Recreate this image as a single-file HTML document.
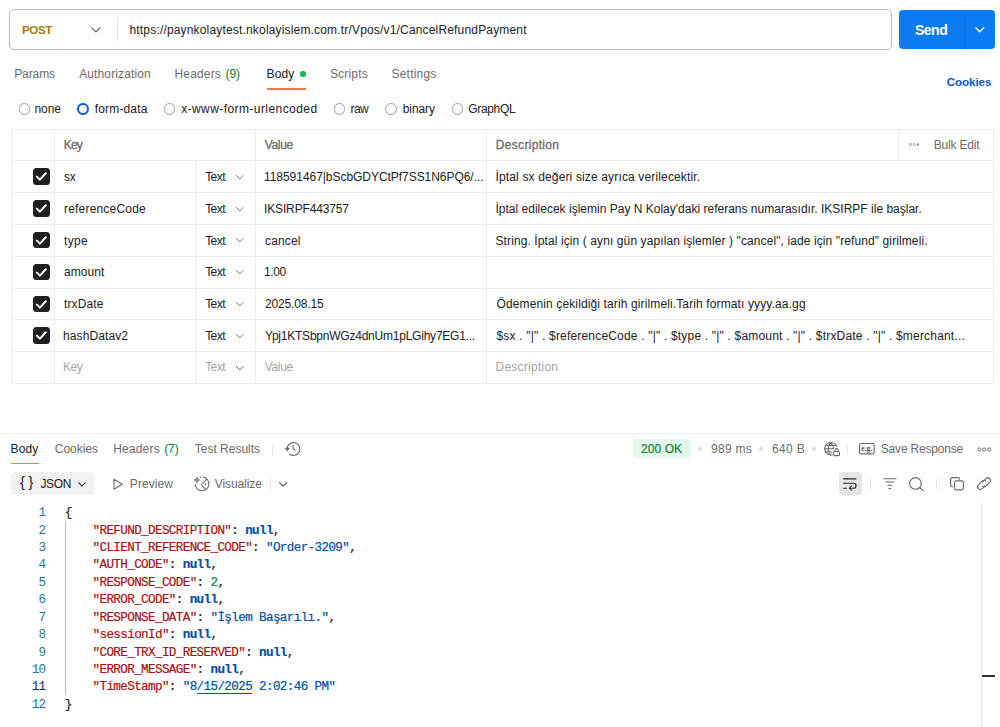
<!DOCTYPE html>
<html lang="tr">
<head>
<meta charset="utf-8">
<title>CancelRefundPayment</title>
<style>
html,body{margin:0;padding:0;background:#fff;}
body{width:1000px;height:727px;position:relative;overflow:hidden;font-family:"Liberation Sans",sans-serif;}
.t{position:absolute;white-space:pre;line-height:16px;font-family:"Liberation Sans",sans-serif;}
.a{position:absolute;}
.hl{position:absolute;height:1px;background:#ededed;}
.vl{position:absolute;width:1px;background:#ededed;}
.cb{position:absolute;left:33px;width:16.5px;height:16.5px;border-radius:3.5px;background:#1f1f1f;}
.cb svg{position:absolute;left:0;top:0;}
.rd{position:absolute;width:11.8px;height:11.8px;border:1.1px solid #9c9c9c;border-radius:50%;box-sizing:border-box;background:#fff;}
.dot{position:absolute;width:4px;height:4px;border-radius:50%;background:#dcdcdc;}
.code{position:absolute;left:0;top:0;font-family:"Liberation Mono",monospace;font-size:12.6px;letter-spacing:-0.62px;white-space:pre;line-height:17.41px;}
.ln{position:absolute;width:45.5px;text-align:right;color:#237893;}
.cl{position:absolute;left:64.8px;color:#212121;-webkit-text-stroke:0.22px;}
.k{color:#a31515;} .s{color:#0451a5;} .n{color:#0451a5;font-weight:700;} .d{color:#098658;}
svg{overflow:visible}
</style>
</head>
<body>
<!-- URL bar -->
<div class="a" style="left:9.4px;top:9.4px;width:882.4px;height:40.8px;box-sizing:border-box;border:1.5px solid #b9b9b9;border-radius:5px;"></div>
<div class="vl" style="left:117px;top:18px;height:23px;background:#e3e3e3;"></div>
<svg class="a" style="left:91px;top:27px" width="10" height="6" viewBox="0 0 10 6"><path d="M0.8 0.8 L4.9 4.8 L9 0.8" fill="none" stroke="#5c5c5c" stroke-width="1.15" stroke-linecap="round" stroke-linejoin="round"/></svg>
<!-- Send -->
<div class="a" style="left:899px;top:10.3px;width:96px;height:38.7px;border-radius:4px;background:#0c7bf1;"></div>
<div class="vl" style="left:963.5px;top:10.3px;height:38.7px;background:#0b72e2;"></div>
<svg class="a" style="left:975px;top:27.3px" width="10" height="6" viewBox="0 0 10 6"><path d="M0.7 0.7 L4.7 4.7 L8.7 0.7" fill="none" stroke="#fff" stroke-width="1.3" stroke-linecap="round" stroke-linejoin="round"/></svg>
<!-- tab underline + dot -->
<div class="a" style="left:266.7px;top:88.4px;width:39.5px;height:1.4px;background:#ff7443;"></div>
<div class="a" style="left:300.3px;top:71.3px;width:5.4px;height:5.4px;border-radius:50%;background:#1db954;"></div>
<!-- radios -->
<div class="rd" style="left:18.6px;top:102.8px"></div>
<div class="rd" style="left:77.2px;top:102.8px;border:2.7px solid #0b57d4;"></div>
<div class="rd" style="left:163.6px;top:102.8px"></div>
<div class="rd" style="left:333.6px;top:102.8px"></div>
<div class="rd" style="left:385.3px;top:102.8px"></div>
<div class="rd" style="left:451.6px;top:102.8px"></div>
<div class="hl" style="left:10.7px;top:128.50px;width:983.2px"></div>
<div class="hl" style="left:10.7px;top:160.30px;width:983.2px"></div>
<div class="hl" style="left:10.7px;top:192.10px;width:983.2px"></div>
<div class="hl" style="left:10.7px;top:223.90px;width:983.2px"></div>
<div class="hl" style="left:10.7px;top:255.70px;width:983.2px"></div>
<div class="hl" style="left:10.7px;top:287.50px;width:983.2px"></div>
<div class="hl" style="left:10.7px;top:319.30px;width:983.2px"></div>
<div class="hl" style="left:10.7px;top:351.10px;width:983.2px"></div>
<div class="hl" style="left:10.7px;top:382.70px;width:983.2px"></div>
<div class="vl" style="left:10.7px;top:128.5px;height:255.2px"></div>
<div class="vl" style="left:993.4px;top:128.5px;height:255.2px"></div>
<div class="vl" style="left:54.4px;top:129.0px;height:254.2px"></div>
<div class="vl" style="left:255.0px;top:129.0px;height:254.2px"></div>
<div class="vl" style="left:485.5px;top:129.0px;height:254.2px"></div>
<div class="vl" style="left:196.0px;top:160.8px;height:222.4px"></div>
<div class="vl" style="left:897.8px;top:129.0px;height:31.8px"></div>
<div class="cb" style="top:168.35px"><svg width="16.5" height="16.5" viewBox="0 0 16.5 16.5"><path d="M3.8 8.6 L6.9 11.6 L12.8 5.2" fill="none" stroke="#fff" stroke-width="2" stroke-linecap="round" stroke-linejoin="round"/></svg></div>
<div class="cb" style="top:200.15px"><svg width="16.5" height="16.5" viewBox="0 0 16.5 16.5"><path d="M3.8 8.6 L6.9 11.6 L12.8 5.2" fill="none" stroke="#fff" stroke-width="2" stroke-linecap="round" stroke-linejoin="round"/></svg></div>
<div class="cb" style="top:231.95px"><svg width="16.5" height="16.5" viewBox="0 0 16.5 16.5"><path d="M3.8 8.6 L6.9 11.6 L12.8 5.2" fill="none" stroke="#fff" stroke-width="2" stroke-linecap="round" stroke-linejoin="round"/></svg></div>
<div class="cb" style="top:263.75px"><svg width="16.5" height="16.5" viewBox="0 0 16.5 16.5"><path d="M3.8 8.6 L6.9 11.6 L12.8 5.2" fill="none" stroke="#fff" stroke-width="2" stroke-linecap="round" stroke-linejoin="round"/></svg></div>
<div class="cb" style="top:295.55px"><svg width="16.5" height="16.5" viewBox="0 0 16.5 16.5"><path d="M3.8 8.6 L6.9 11.6 L12.8 5.2" fill="none" stroke="#fff" stroke-width="2" stroke-linecap="round" stroke-linejoin="round"/></svg></div>
<div class="cb" style="top:327.35px"><svg width="16.5" height="16.5" viewBox="0 0 16.5 16.5"><path d="M3.8 8.6 L6.9 11.6 L12.8 5.2" fill="none" stroke="#fff" stroke-width="2" stroke-linecap="round" stroke-linejoin="round"/></svg></div>
<svg class="a" style="left:235.7px;top:174.70px" width="8" height="5" viewBox="0 0 8 5"><path d="M0.5 0.5 L3.8 3.9 L7.1 0.5" fill="none" stroke="#7a7a7a" stroke-width="1" stroke-linecap="round" stroke-linejoin="round"/></svg>
<svg class="a" style="left:235.7px;top:206.50px" width="8" height="5" viewBox="0 0 8 5"><path d="M0.5 0.5 L3.8 3.9 L7.1 0.5" fill="none" stroke="#7a7a7a" stroke-width="1" stroke-linecap="round" stroke-linejoin="round"/></svg>
<svg class="a" style="left:235.7px;top:238.30px" width="8" height="5" viewBox="0 0 8 5"><path d="M0.5 0.5 L3.8 3.9 L7.1 0.5" fill="none" stroke="#7a7a7a" stroke-width="1" stroke-linecap="round" stroke-linejoin="round"/></svg>
<svg class="a" style="left:235.7px;top:270.10px" width="8" height="5" viewBox="0 0 8 5"><path d="M0.5 0.5 L3.8 3.9 L7.1 0.5" fill="none" stroke="#7a7a7a" stroke-width="1" stroke-linecap="round" stroke-linejoin="round"/></svg>
<svg class="a" style="left:235.7px;top:301.90px" width="8" height="5" viewBox="0 0 8 5"><path d="M0.5 0.5 L3.8 3.9 L7.1 0.5" fill="none" stroke="#7a7a7a" stroke-width="1" stroke-linecap="round" stroke-linejoin="round"/></svg>
<svg class="a" style="left:235.7px;top:333.70px" width="8" height="5" viewBox="0 0 8 5"><path d="M0.5 0.5 L3.8 3.9 L7.1 0.5" fill="none" stroke="#7a7a7a" stroke-width="1" stroke-linecap="round" stroke-linejoin="round"/></svg>
<svg class="a" style="left:235.7px;top:365.50px" width="8" height="5" viewBox="0 0 8 5"><path d="M0.5 0.5 L3.8 3.9 L7.1 0.5" fill="none" stroke="#6b6b6b" stroke-width="1" stroke-linecap="round" stroke-linejoin="round"/></svg>
<div class="a" style="left:909.2px;top:143.3px;width:2.8px;height:2.8px;border-radius:50%;box-sizing:border-box;border:0.8px solid #8f8f8f"></div>
<div class="a" style="left:912.9px;top:143.3px;width:2.8px;height:2.8px;border-radius:50%;box-sizing:border-box;border:0.8px solid #8f8f8f"></div>
<div class="a" style="left:916.6px;top:143.3px;width:2.8px;height:2.8px;border-radius:50%;box-sizing:border-box;border:0.8px solid #8f8f8f"></div>
<!-- response separator -->
<div class="hl" style="left:0;top:432.7px;width:1000px;background:#ebebeb;"></div>
<div class="a" style="left:11px;top:462.8px;width:27.5px;height:1.4px;background:#ff7443;"></div>
<div class="vl" style="left:272.2px;top:443.5px;height:11px;background:#e6e6e6;"></div>
<!-- history icon -->
<svg class="a" style="left:284px;top:441px" width="17" height="16" viewBox="0 0 17 16"><g fill="none" stroke="#6b6b6b" stroke-width="1.15" stroke-linecap="round" stroke-linejoin="round"><path d="M3.1 7.6 A6.4 6.4 0 1 1 5.5 13"/><path d="M9 4.3 V7.8 L11 9.4"/><path d="M1.3 7.1 H5.5 L3.3 9.9 Z" fill="#6b6b6b" stroke-width="0.6"/></g></svg>
<!-- status badge -->
<div class="a" style="left:632.5px;top:439.4px;width:58.2px;height:19px;border-radius:4px;background:#e4f9ec;"></div>
<div class="dot" style="left:697.8px;top:447px"></div>
<div class="dot" style="left:759.3px;top:447px"></div>
<div class="dot" style="left:812.2px;top:447px"></div>
<!-- globe-lock icon -->
<svg class="a" style="left:823.5px;top:441.8px" width="17" height="15" viewBox="0 0 17 15"><g fill="none" stroke="#6b6b6b" stroke-width="1.05" stroke-linecap="round" stroke-linejoin="round"><path d="M8.2 12.9 A6.3 6.3 0 1 1 12.9 4.6"/><path d="M6.6 12.8 C3.6 9.5 3.6 3.6 6.6 0.6 C8.6 2.6 9.4 4.6 9.5 6.6"/><path d="M0.6 6.7 H9.4"/><path d="M1.6 3.4 H11.6 M1.6 10 H8"/><rect x="9.7" y="9.4" width="5.8" height="4.2" rx="1" fill="#fff"/><path d="M11.1 9.4 V8.1 A1.5 1.5 0 0 1 14.1 8.1 V9.4"/></g></svg>
<div class="vl" style="left:846.8px;top:443.7px;height:10.6px;background:#e6e6e6;"></div>
<!-- e.g. icon -->
<svg class="a" style="left:859.3px;top:443.3px" width="16" height="12" viewBox="0 0 16 12"><rect x="0.55" y="0.55" width="14.6" height="10.3" rx="1.4" fill="none" stroke="#6b6b6b" stroke-width="1.1"/><text x="7.75" y="7.9" text-anchor="middle" font-family="Liberation Serif, serif" font-size="7.6" font-weight="700" fill="#555">e.g.</text></svg>
<!-- ooo -->
<svg class="a" style="left:976.5px;top:446.5px" width="15" height="5" viewBox="0 0 15 5"><g fill="none" stroke="#6b6b6b" stroke-width="1"><circle cx="2.3" cy="2.5" r="1.6"/><circle cx="7.2" cy="2.5" r="1.6"/><circle cx="12.1" cy="2.5" r="1.6"/></g></svg>
<!-- JSON button -->
<div class="a" style="left:11px;top:472.3px;width:82.7px;height:22.4px;border-radius:4px;background:#f2f2f2;"></div>
<svg class="a" style="left:78.3px;top:481.8px" width="9" height="5" viewBox="0 0 9 5"><path d="M0.6 0.6 L4 4 L7.4 0.6" fill="none" stroke="#333" stroke-width="1.1" stroke-linecap="round" stroke-linejoin="round"/></svg>
<!-- preview play -->
<svg class="a" style="left:112.5px;top:477.5px" width="11" height="13" viewBox="0 0 11 13"><path d="M1 1.2 V11.2 L9.3 6.2 Z" fill="none" stroke="#6b6b6b" stroke-width="1.1" stroke-linejoin="round"/></svg>
<!-- visualize icon -->
<svg class="a" style="left:194px;top:476px" width="16" height="16" viewBox="0 0 16 16"><g fill="none" stroke="#6b6b6b" stroke-width="1.05" stroke-linecap="round" stroke-linejoin="round"><path d="M9 1.1 A6.9 6.9 0 1 1 1.15 8.5"/><path d="M12.5 3.4 L7.3 8.5 L11.5 13.4"/><path d="M11.5 7.3 L12 8.5 L11.5 9.7 L11 8.5 Z" fill="#6b6b6b" stroke-width="0.5"/><path d="M2.9 1.5 L3.6 3.3 L5.4 4 L3.6 4.7 L2.9 6.5 L2.2 4.7 L0.4 4 L2.2 3.3 Z"/><circle cx="6.1" cy="1.2" r="0.45" fill="#6b6b6b" stroke-width="0.5"/></g></svg>
<div class="vl" style="left:270.2px;top:476px;height:15.6px;background:#e9e9e9;"></div>
<svg class="a" style="left:278.6px;top:481.6px" width="9" height="5" viewBox="0 0 9 5"><path d="M0.6 0.6 L4.2 4.2 L7.8 0.6" fill="none" stroke="#555" stroke-width="1.1" stroke-linecap="round" stroke-linejoin="round"/></svg>
<!-- right toolbar -->
<div class="a" style="left:838.9px;top:472.2px;width:22.8px;height:22.4px;border-radius:4px;background:#e6e6e6;"></div>
<svg class="a" style="left:843.4px;top:478px" width="14" height="13" viewBox="0 0 14 13"><g fill="none" stroke="#2b2b2b" stroke-width="1.15" stroke-linecap="round" stroke-linejoin="round"><path d="M0.6 0.8 H13"/><path d="M0.6 5.2 H10.6 A2.5 2.5 0 0 1 10.6 10.2 H6.6"/><path d="M8.4 8.2 L6.4 10.2 L8.4 12.2"/><path d="M0.6 10.2 H3.6"/></g></svg>
<div class="vl" style="left:869.6px;top:478.5px;height:10px;background:#e6e6e6;"></div>
<svg class="a" style="left:883.4px;top:478.4px" width="14" height="12" viewBox="0 0 14 12"><g fill="none" stroke="#6b6b6b" stroke-width="1.1" stroke-linecap="round"><path d="M0.6 0.7 H13"/><path d="M2.8 4 H10.8"/><path d="M4.8 7.3 H8.8"/><path d="M5.9 10.6 H7.7"/></g></svg>
<svg class="a" style="left:909.4px;top:476.8px" width="16" height="15" viewBox="0 0 16 15"><g fill="none" stroke="#6b6b6b" stroke-width="1.15" stroke-linecap="round"><circle cx="6.5" cy="6.4" r="5.8"/><path d="M10.8 10.7 L14.3 13.6"/></g></svg>
<div class="vl" style="left:936px;top:478.5px;height:10px;background:#e6e6e6;"></div>
<svg class="a" style="left:949.8px;top:477.3px" width="15" height="14" viewBox="0 0 15 14"><g fill="none" stroke="#6b6b6b" stroke-width="1.15" stroke-linejoin="round" stroke-linecap="round"><rect x="4.4" y="3.8" width="9" height="9" rx="1.8"/><path d="M2.4 9.6 H2.2 A1.6 1.6 0 0 1 0.6 8 V2.2 A1.6 1.6 0 0 1 2.2 0.6 H8 A1.6 1.6 0 0 1 9.6 2.2"/></g></svg>
<svg class="a" style="left:976.6px;top:477.3px" width="15" height="14" viewBox="0 0 15 14"><g fill="none" stroke="#6b6b6b" stroke-width="1.15" stroke-linecap="round" stroke-linejoin="round"><path d="M6.2 4.3 L8.9 1.6 A2.6 2.6 0 0 1 12.6 5.3 L8.9 9 A2.6 2.6 0 0 1 5.4 9.1"/><path d="M7.9 8.9 L5.2 11.6 A2.6 2.6 0 0 1 1.5 7.9 L5.2 4.2 A2.6 2.6 0 0 1 8.7 4.1"/></g></svg>
<!-- editor -->
<div class="vl" style="left:981px;top:503px;height:224px;background:#e9e9e9;"></div>
<div class="a" style="left:982px;top:675.4px;width:13px;height:1.8px;background:#333;"></div>
<div class="vl" style="left:65px;top:521px;height:174px;background:#b9b9b9;"></div>
<div class="a" style="left:197px;top:692.5px;width:55px;height:1px;background:#0451a5;"></div>
<div class="code">
<div class="ln" style="top:505.24px;">1</div><div class="cl" style="top:505.24px">{</div>
<div class="ln" style="top:522.65px;">2</div><div class="cl" style="top:522.65px">    <span class="k">"REFUND_DESCRIPTION"</span>: <span class="n">null</span>,</div>
<div class="ln" style="top:540.06px;">3</div><div class="cl" style="top:540.06px">    <span class="k">"CLIENT_REFERENCE_CODE"</span>: <span class="s">"Order-3209"</span>,</div>
<div class="ln" style="top:557.47px;">4</div><div class="cl" style="top:557.47px">    <span class="k">"AUTH_CODE"</span>: <span class="n">null</span>,</div>
<div class="ln" style="top:574.88px;">5</div><div class="cl" style="top:574.88px">    <span class="k">"RESPONSE_CODE"</span>: <span class="d">2</span>,</div>
<div class="ln" style="top:592.29px;">6</div><div class="cl" style="top:592.29px">    <span class="k">"ERROR_CODE"</span>: <span class="n">null</span>,</div>
<div class="ln" style="top:609.70px;">7</div><div class="cl" style="top:609.70px">    <span class="k">"RESPONSE_DATA"</span>: <span class="s">"İşlem Başarılı."</span>,</div>
<div class="ln" style="top:627.11px;">8</div><div class="cl" style="top:627.11px">    <span class="k">"sessionId"</span>: <span class="n">null</span>,</div>
<div class="ln" style="top:644.52px;">9</div><div class="cl" style="top:644.52px">    <span class="k">"CORE_TRX_ID_RESERVED"</span>: <span class="n">null</span>,</div>
<div class="ln" style="top:661.93px;">10</div><div class="cl" style="top:661.93px">    <span class="k">"ERROR_MESSAGE"</span>: <span class="n">null</span>,</div>
<div class="ln" style="top:679.34px;color:#0b216f">11</div><div class="cl" style="top:679.34px">    <span class="k">"TimeStamp"</span>: <span class="s">"8/15/2025 2:02:46 PM"</span></div>
<div class="ln" style="top:696.75px;">12</div><div class="cl" style="top:696.75px">}</div>
</div>
<span class="t" style="left:22.1px;top:22.15px;font-size:11.7px;font-weight:700;color:#b07c05;letter-spacing:-0.533px">POST</span>
<span class="t" style="left:129.5px;top:22.04px;font-size:12px;font-weight:400;color:#212121;letter-spacing:0.172px">https://paynkolaytest.nkolayislem.com.tr/Vpos/v1/CancelRefundPayment</span>
<span class="t" style="left:915.0px;top:22.15px;font-size:14px;font-weight:700;color:#ffffff;letter-spacing:-0.5px">Send</span>
<span class="t" style="left:14.2px;top:65.84px;font-size:12px;font-weight:400;color:#6b6b6b;letter-spacing:-0.1px">Params</span>
<span class="t" style="left:79.2px;top:65.84px;font-size:12px;font-weight:400;color:#6b6b6b;letter-spacing:0.125px">Authorization</span>
<span class="t" style="left:174.5px;top:65.84px;font-size:12px;font-weight:400;color:#6b6b6b;letter-spacing:0.167px">Headers</span>
<span class="t" style="left:225.5px;top:65.84px;font-size:12px;font-weight:400;color:#0a7b3e;letter-spacing:-0.1px">(9)</span>
<span class="t" style="left:266.5px;top:65.84px;font-size:12px;font-weight:400;color:#212121;letter-spacing:0.167px">Body</span>
<span class="t" style="left:329.9px;top:65.84px;font-size:12px;font-weight:400;color:#6b6b6b;letter-spacing:0.183px">Scripts</span>
<span class="t" style="left:391.5px;top:65.84px;font-size:12px;font-weight:400;color:#6b6b6b;letter-spacing:0.214px">Settings</span>
<span class="t" style="left:946.8px;top:73.95px;font-size:11.7px;font-weight:700;color:#0b5cc9;letter-spacing:-0.133px">Cookies</span>
<span class="t" style="left:34.5px;top:101.04px;font-size:12px;font-weight:400;color:#212121;letter-spacing:-0.067px">none</span>
<span class="t" style="left:94.8px;top:101.04px;font-size:12px;font-weight:400;color:#212121;letter-spacing:0.15px">form-data</span>
<span class="t" style="left:181.2px;top:101.04px;font-size:12px;font-weight:400;color:#212121;letter-spacing:0.425px">x-www-form-urlencoded</span>
<span class="t" style="left:350.5px;top:101.04px;font-size:12px;font-weight:400;color:#212121;letter-spacing:-0.6px">raw</span>
<span class="t" style="left:402.8px;top:101.04px;font-size:12px;font-weight:400;color:#212121;letter-spacing:-0.1px">binary</span>
<span class="t" style="left:468.2px;top:101.04px;font-size:12px;font-weight:400;color:#212121;letter-spacing:-0.317px">GraphQL</span>
<span class="t" style="left:63.8px;top:137.14px;font-size:12px;font-weight:400;color:#6b6b6b;letter-spacing:-0.8px;-webkit-text-stroke:0.3px #6b6b6b">Key</span>
<span class="t" style="left:264.8px;top:137.14px;font-size:12px;font-weight:400;color:#6b6b6b;letter-spacing:-0.375px;-webkit-text-stroke:0.3px #6b6b6b">Value</span>
<span class="t" style="left:495.8px;top:137.14px;font-size:12px;font-weight:400;color:#6b6b6b;letter-spacing:0.32px;-webkit-text-stroke:0.3px #6b6b6b">Description</span>
<span class="t" style="left:933.8px;top:137.14px;font-size:12px;font-weight:400;color:#6b6b6b;letter-spacing:-0.188px">Bulk Edit</span>
<span class="t" style="left:64.0px;top:169.04px;font-size:12px;font-weight:400;color:#212121;letter-spacing:-0.3px">sx</span>
<span class="t" style="left:205.2px;top:169.04px;font-size:12px;font-weight:400;color:#212121;letter-spacing:-0.567px">Text</span>
<span class="t" style="left:264.0px;top:169.04px;font-size:12px;font-weight:400;color:#212121;letter-spacing:-0.045px">118591467|bScbGDYCtPf7SS1N6PQ6/...</span>
<span class="t" style="left:495.5px;top:169.04px;font-size:12px;font-weight:400;color:#212121;letter-spacing:0.147px">İptal sx değeri size ayrıca verilecektir.</span>
<span class="t" style="left:64.0px;top:200.84px;font-size:12px;font-weight:400;color:#212121;letter-spacing:0.192px">referenceCode</span>
<span class="t" style="left:205.2px;top:200.84px;font-size:12px;font-weight:400;color:#212121;letter-spacing:-0.567px">Text</span>
<span class="t" style="left:264.0px;top:200.84px;font-size:12px;font-weight:400;color:#212121;letter-spacing:-0.142px">IKSIRPF443757</span>
<span class="t" style="left:495.5px;top:200.84px;font-size:12px;font-weight:400;color:#212121;letter-spacing:0.006px">İptal edilecek işlemin Pay N Kolay'daki referans numarasıdır. IKSIRPF ile başlar.</span>
<span class="t" style="left:64.0px;top:232.64px;font-size:12px;font-weight:400;color:#212121;letter-spacing:0.333px">type</span>
<span class="t" style="left:205.2px;top:232.64px;font-size:12px;font-weight:400;color:#212121;letter-spacing:-0.567px">Text</span>
<span class="t" style="left:265.0px;top:232.64px;font-size:12px;font-weight:400;color:#212121;letter-spacing:0.14px">cancel</span>
<span class="t" style="left:495.5px;top:232.64px;font-size:12px;font-weight:400;color:#212121;letter-spacing:0.101px">String. İptal için ( aynı gün yapılan işlemler ) &quot;cancel&quot;, iade için &quot;refund&quot; girilmeli.</span>
<span class="t" style="left:64.0px;top:264.44px;font-size:12px;font-weight:400;color:#212121;letter-spacing:0.06px">amount</span>
<span class="t" style="left:205.2px;top:264.44px;font-size:12px;font-weight:400;color:#212121;letter-spacing:-0.567px">Text</span>
<span class="t" style="left:264.0px;top:264.44px;font-size:12px;font-weight:400;color:#212121;letter-spacing:-0.433px">1.00</span>
<span class="t" style="left:64.0px;top:296.24px;font-size:12px;font-weight:400;color:#212121;letter-spacing:0.117px">trxDate</span>
<span class="t" style="left:205.2px;top:296.24px;font-size:12px;font-weight:400;color:#212121;letter-spacing:-0.567px">Text</span>
<span class="t" style="left:265.0px;top:296.24px;font-size:12px;font-weight:400;color:#212121;letter-spacing:-0.144px">2025.08.15</span>
<span class="t" style="left:496.5px;top:296.24px;font-size:12px;font-weight:400;color:#212121;letter-spacing:0.124px">Ödemenin çekildiği tarih girilmeli.Tarih formatı yyyy.aa.gg</span>
<span class="t" style="left:63.0px;top:328.04px;font-size:12px;font-weight:400;color:#212121;letter-spacing:0.111px">hashDatav2</span>
<span class="t" style="left:205.2px;top:328.04px;font-size:12px;font-weight:400;color:#212121;letter-spacing:-0.567px">Text</span>
<span class="t" style="left:265.0px;top:328.04px;font-size:12px;font-weight:400;color:#212121;letter-spacing:-0.226px">Ypj1KTSbpnWGz4dnUm1pLGihy7EG1...</span>
<span class="t" style="left:496.5px;top:328.04px;font-size:12px;font-weight:400;color:#212121;letter-spacing:0.185px">$sx . &quot;|&quot; . $referenceCode . &quot;|&quot; . $type . &quot;|&quot; . $amount . &quot;|&quot; . $trxDate . &quot;|&quot; . $merchant...</span>
<span class="t" style="left:63.0px;top:359.24px;font-size:12px;font-weight:400;color:#a6a6a6;letter-spacing:-0.5px">Key</span>
<span class="t" style="left:205.2px;top:359.24px;font-size:12px;font-weight:400;color:#a6a6a6;letter-spacing:-0.567px">Text</span>
<span class="t" style="left:264.8px;top:359.24px;font-size:12px;font-weight:400;color:#a6a6a6;letter-spacing:-0.375px">Value</span>
<span class="t" style="left:495.5px;top:359.24px;font-size:12px;font-weight:400;color:#a6a6a6;letter-spacing:0.25px">Description</span>
<span class="t" style="left:10.5px;top:440.84px;font-size:12px;font-weight:400;color:#212121;letter-spacing:0.167px">Body</span>
<span class="t" style="left:54.8px;top:440.84px;font-size:12px;font-weight:400;color:#6b6b6b;letter-spacing:-0.017px">Cookies</span>
<span class="t" style="left:113.2px;top:440.84px;font-size:12px;font-weight:400;color:#6b6b6b;letter-spacing:0.183px">Headers</span>
<span class="t" style="left:164.2px;top:440.84px;font-size:12px;font-weight:400;color:#0a7b3e;letter-spacing:-0.1px">(7)</span>
<span class="t" style="left:194.8px;top:440.84px;font-size:12px;font-weight:400;color:#6b6b6b;letter-spacing:-0.009px">Test Results</span>
<span class="t" style="left:641.1px;top:440.84px;font-size:12px;font-weight:400;color:#0b7f35;letter-spacing:0.06px;-webkit-text-stroke:0.2px #0b7f35">200 OK</span>
<span class="t" style="left:710.9px;top:440.84px;font-size:12px;font-weight:400;color:#6b6b6b;letter-spacing:0.32px">989 ms</span>
<span class="t" style="left:772.1px;top:440.84px;font-size:12px;font-weight:400;color:#6b6b6b;letter-spacing:0.3px">640 B</span>
<span class="t" style="left:880.8px;top:440.84px;font-size:12px;font-weight:400;color:#6b6b6b;letter-spacing:-0.192px">Save Response</span>
<span class="t" style="left:20.1px;top:474.38px;font-size:14.5px;font-weight:400;color:#212121;letter-spacing:-0.5px">{</span>
<span class="t" style="left:28.5px;top:474.38px;font-size:14.5px;font-weight:400;color:#212121;letter-spacing:-0.5px">}</span>
<span class="t" style="left:40.5px;top:475.84px;font-size:12px;font-weight:400;color:#212121;letter-spacing:-0.4px">JSON</span>
<span class="t" style="left:129.8px;top:475.84px;font-size:12px;font-weight:400;color:#6b6b6b;letter-spacing:0.083px">Preview</span>
<span class="t" style="left:214.8px;top:475.84px;font-size:12px;font-weight:400;color:#6b6b6b;letter-spacing:-0.1px">Visualize</span></body></html>
